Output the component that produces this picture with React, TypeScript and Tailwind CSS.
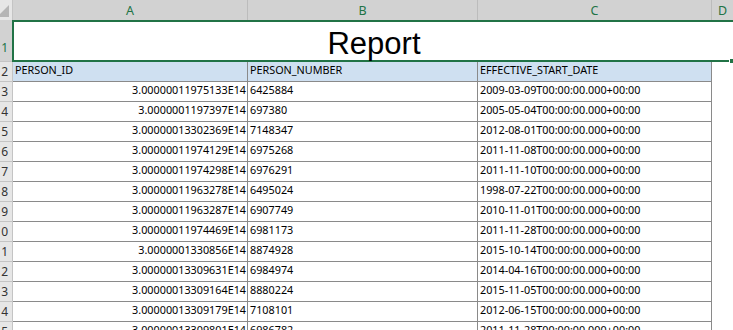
import React from "react";

const rows: [string, string, string][] = [
  ["3.00000011975133E14", "6425884", "2009-03-09T00:00:00.000+00:00"],
  ["3.0000001197397E14", "697380", "2005-05-04T00:00:00.000+00:00"],
  ["3.00000013302369E14", "7148347", "2012-08-01T00:00:00.000+00:00"],
  ["3.00000011974129E14", "6975268", "2011-11-08T00:00:00.000+00:00"],
  ["3.00000011974298E14", "6976291", "2011-11-10T00:00:00.000+00:00"],
  ["3.00000011963278E14", "6495024", "1998-07-22T00:00:00.000+00:00"],
  ["3.00000011963287E14", "6907749", "2010-11-01T00:00:00.000+00:00"],
  ["3.00000011974469E14", "6981173", "2011-11-28T00:00:00.000+00:00"],
  ["3.0000001330856E14", "8874928", "2015-10-14T00:00:00.000+00:00"],
  ["3.00000013309631E14", "6984974", "2014-04-16T00:00:00.000+00:00"],
  ["3.00000013309164E14", "8880224", "2015-11-05T00:00:00.000+00:00"],
  ["3.00000013309179E14", "7108101", "2012-06-15T00:00:00.000+00:00"],
  ["3.00000013309801E14", "6986782", "2011-11-28T00:00:00.000+00:00"],
];

function RowHead({ n }: { n: number }) {
  return (
    <div className="w-[13px] h-[20px] shrink-0 bg-[#e6e6e6] border-r border-b border-[#c4c4c4] flex justify-end pr-[4px] overflow-hidden whitespace-nowrap text-[12px] leading-[20px] text-[#333333]">
      {n}
    </div>
  );
}

export default function App() {
  return (
    <div
      className="relative w-[733px] h-[330px] overflow-hidden bg-white text-black"
      style={{ fontFamily: '"Noto Sans", Arial, sans-serif' }}
    >
      {/* column headers */}
      <div className="flex h-[20px]">
        <div className="relative w-[13px] shrink-0 bg-[#e6e6e6] border-r border-[#c4c4c4]">
          <svg className="absolute left-0 top-0" width="12" height="20" viewBox="0 0 12 20">
            <polygon points="9,5 9,17 -3,17" fill="#b5b5b5" />
          </svg>
        </div>
        <div className="w-[235px] shrink-0 bg-[#d2d2d2] border-r border-[#bcbcbc] text-center text-[12.5px] leading-[20px] pt-[1px] text-[#217346]">A</div>
        <div className="w-[230px] shrink-0 bg-[#d2d2d2] border-r border-[#bcbcbc] text-center text-[12.5px] leading-[20px] pt-[1px] text-[#217346]">B</div>
        <div className="w-[234px] shrink-0 bg-[#d2d2d2] border-r border-[#bcbcbc] text-center text-[12.5px] leading-[20px] pt-[1px] text-[#217346]">C</div>
        <div className="flex-1 bg-[#d2d2d2] text-center text-[12.5px] leading-[20px] pt-[1px] text-[#217346]">D</div>
      </div>

      {/* row 1 merged title */}
      <div className="flex h-[42px]">
        <div className="w-[12px] shrink-0 bg-[#d2d2d2] border-b border-[#c4c4c4] flex items-end justify-end pr-[4px] pb-[6px] overflow-hidden text-[12px] leading-[14px] text-[#217346]">
          1
        </div>
        <div className="w-[724px] shrink-0 border-2 border-[#217346] flex items-end justify-center pb-[1px]">
          <span
            className="text-[31px] leading-[31px] text-black"
            style={{ fontFamily: '"Liberation Sans", Arial, sans-serif' }}
          >
            Report
          </span>
        </div>
      </div>

      {/* row 2 header */}
      <div className="flex h-[20px]">
        <RowHead n={2} />
        <div className="w-[235px] shrink-0 bg-[#cfe0f1] border-r border-b border-[#8a8a8a] pl-[2px] text-[10.8px] leading-[16px] whitespace-nowrap overflow-hidden">PERSON_ID</div>
        <div className="w-[230px] shrink-0 bg-[#cfe0f1] border-r border-b border-[#8a8a8a] pl-[2px] text-[10.8px] leading-[16px] whitespace-nowrap overflow-hidden">PERSON_NUMBER</div>
        <div className="w-[234px] shrink-0 bg-[#cfe0f1] border-r border-b border-[#8a8a8a] pl-[2px] text-[10.8px] leading-[16px] whitespace-nowrap overflow-hidden">EFFECTIVE_START_DATE</div>
        <div className="flex-1" />
      </div>

      {rows.map((r, i) => (
        <div key={i} className="flex h-[20px]">
          <RowHead n={i + 3} />
          <div className="w-[235px] shrink-0 border-r border-b border-[#8a8a8a] pr-[1px] text-right text-[10.8px] leading-[16px] whitespace-nowrap overflow-hidden">{r[0]}</div>
          <div className="w-[230px] shrink-0 border-r border-b border-[#8a8a8a] pl-[2px] text-[10.8px] leading-[16px] whitespace-nowrap overflow-hidden">{r[1]}</div>
          <div className="w-[234px] shrink-0 border-r border-b border-[#8a8a8a] pl-[2px] text-[10.8px] leading-[16px] whitespace-nowrap overflow-hidden">{r[2]}</div>
          <div className="flex-1" />
        </div>
      ))}

      {/* fill handle */}
      <div className="absolute left-[729px] top-[58px] w-[6px] h-[6px] bg-[#217346] border border-white" />
    </div>
  );
}
